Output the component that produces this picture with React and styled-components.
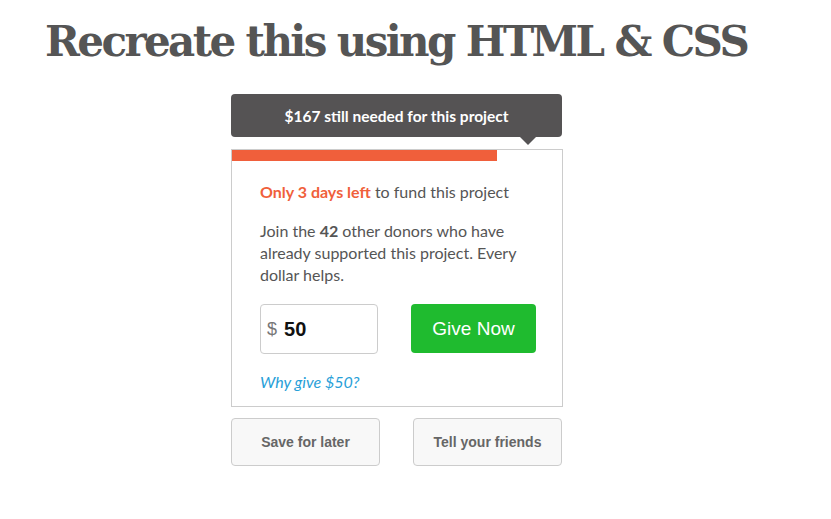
import React from "react";
import styled, { createGlobalStyle } from "styled-components";

const Global = createGlobalStyle`
  body {
    margin: 0;
    background: #fff;
    font-family: Lato, "Open Sans", sans-serif;
  }
`;

function App() {
  return (
    <Page>
      <Global />
      <Title>Recreate this using HTML &amp; CSS</Title>
      <Widget>
        <Tooltip>$167 still needed for this project</Tooltip>
        <Card>
          <Progress>
            <Fill style={{ width: `${(265 / 330) * 100}%` }} />
          </Progress>
          <Body>
            <Lead>
              <Urgent>Only 3 days left</Urgent> to fund this project
            </Lead>
            <Text>
              Join the <b>42</b> other donors who have already supported this
              project. Every dollar helps.
            </Text>
            <GiveRow>
              <Amount>
                <Currency>$</Currency>
                <AmountInput defaultValue="50" />
              </Amount>
              <GiveBtn>Give Now</GiveBtn>
            </GiveRow>
            <Why href="#">Why give $50?</Why>
          </Body>
        </Card>
        <Actions>
          <Secondary>Save for later</Secondary>
          <Secondary>Tell your friends</Secondary>
        </Actions>
      </Widget>
    </Page>
  );
}

export default App;

const Page = styled.div`
  padding: 14px 0 0 45px;
`;

const Title = styled.h1`
  margin: 0;
  font-family: "DejaVu Serif", serif;
  font-weight: bold;
  font-size: 42px;
  line-height: 56px;
  color: #555;
  letter-spacing: -2.6px;
`;

const Widget = styled.div`
  width: 332px;
  margin: 24px 0 0 186px;
`;

const Tooltip = styled.div`
  position: relative;
  width: 331px;
  height: 43px;
  box-sizing: border-box;
  background: #555354;
  border-radius: 4px;
  color: #fff;
  font-weight: bold;
  font-size: 15.5px;
  display: flex;
  align-items: center;
  justify-content: center;
  margin-bottom: 12px;

  &::after {
    content: "";
    position: absolute;
    top: 43px;
    left: 289px;
    border-left: 8px solid transparent;
    border-right: 8px solid transparent;
    border-top: 8px solid #555354;
  }
`;

const Card = styled.div`
  border: 1px solid #ccc;
`;

const Progress = styled.div`
  height: 11px;
  background: #fff;
`;

const Fill = styled.div`
  height: 100%;
  background: #f05f3b;
`;

const Body = styled.div`
  padding: 21px 26px 15px 28px;
  color: #555;
  font-size: 16px;
`;

const Lead = styled.p`
  margin: 0 0 18px;
  line-height: 20px;
`;

const Urgent = styled.span`
  color: #f05f3b;
  font-weight: bold;
`;

const Text = styled.p`
  margin: 0;
  line-height: 22px;

  b {
    font-weight: bold;
  }
`;

const GiveRow = styled.div`
  display: flex;
  justify-content: space-between;
  align-items: flex-start;
  margin-top: 18px;
`;

const Amount = styled.label`
  width: 118px;
  height: 50px;
  box-sizing: border-box;
  border: 1px solid #ccc;
  border-radius: 4px;
  display: flex;
  align-items: center;
  padding-left: 6px;
  font-family: "Liberation Sans", Arial, sans-serif;
`;

const Currency = styled.span`
  color: #777;
  font-size: 18px;
  margin-right: 7px;
`;

const AmountInput = styled.input`
  border: none;
  outline: none;
  width: 70px;
  font-family: "Liberation Sans", Arial, sans-serif;
  font-size: 20px;
  font-weight: bold;
  color: #111;
  padding: 0;
  background: transparent;
`;

const GiveBtn = styled.button`
  width: 125px;
  height: 49px;
  border: none;
  border-radius: 4px;
  background: #1fbb2f;
  color: #fff;
  font-family: "Liberation Sans", Arial, sans-serif;
  font-size: 19px;
  cursor: pointer;
`;

const Why = styled.a`
  display: block;
  margin-top: 18px;
  color: #28a0d8;
  font-style: italic;
  text-decoration: none;
  font-size: 16px;
`;

const Actions = styled.div`
  display: flex;
  justify-content: space-between;
  width: 331px;
  margin-top: 11px;
`;

const Secondary = styled.button`
  width: 149px;
  height: 48px;
  border: 1px solid #ccc;
  border-radius: 4px;
  background: #f8f8f8;
  color: #666;
  font-family: "Liberation Sans", Arial, sans-serif;
  font-weight: bold;
  font-size: 14px;
  cursor: pointer;
`;
